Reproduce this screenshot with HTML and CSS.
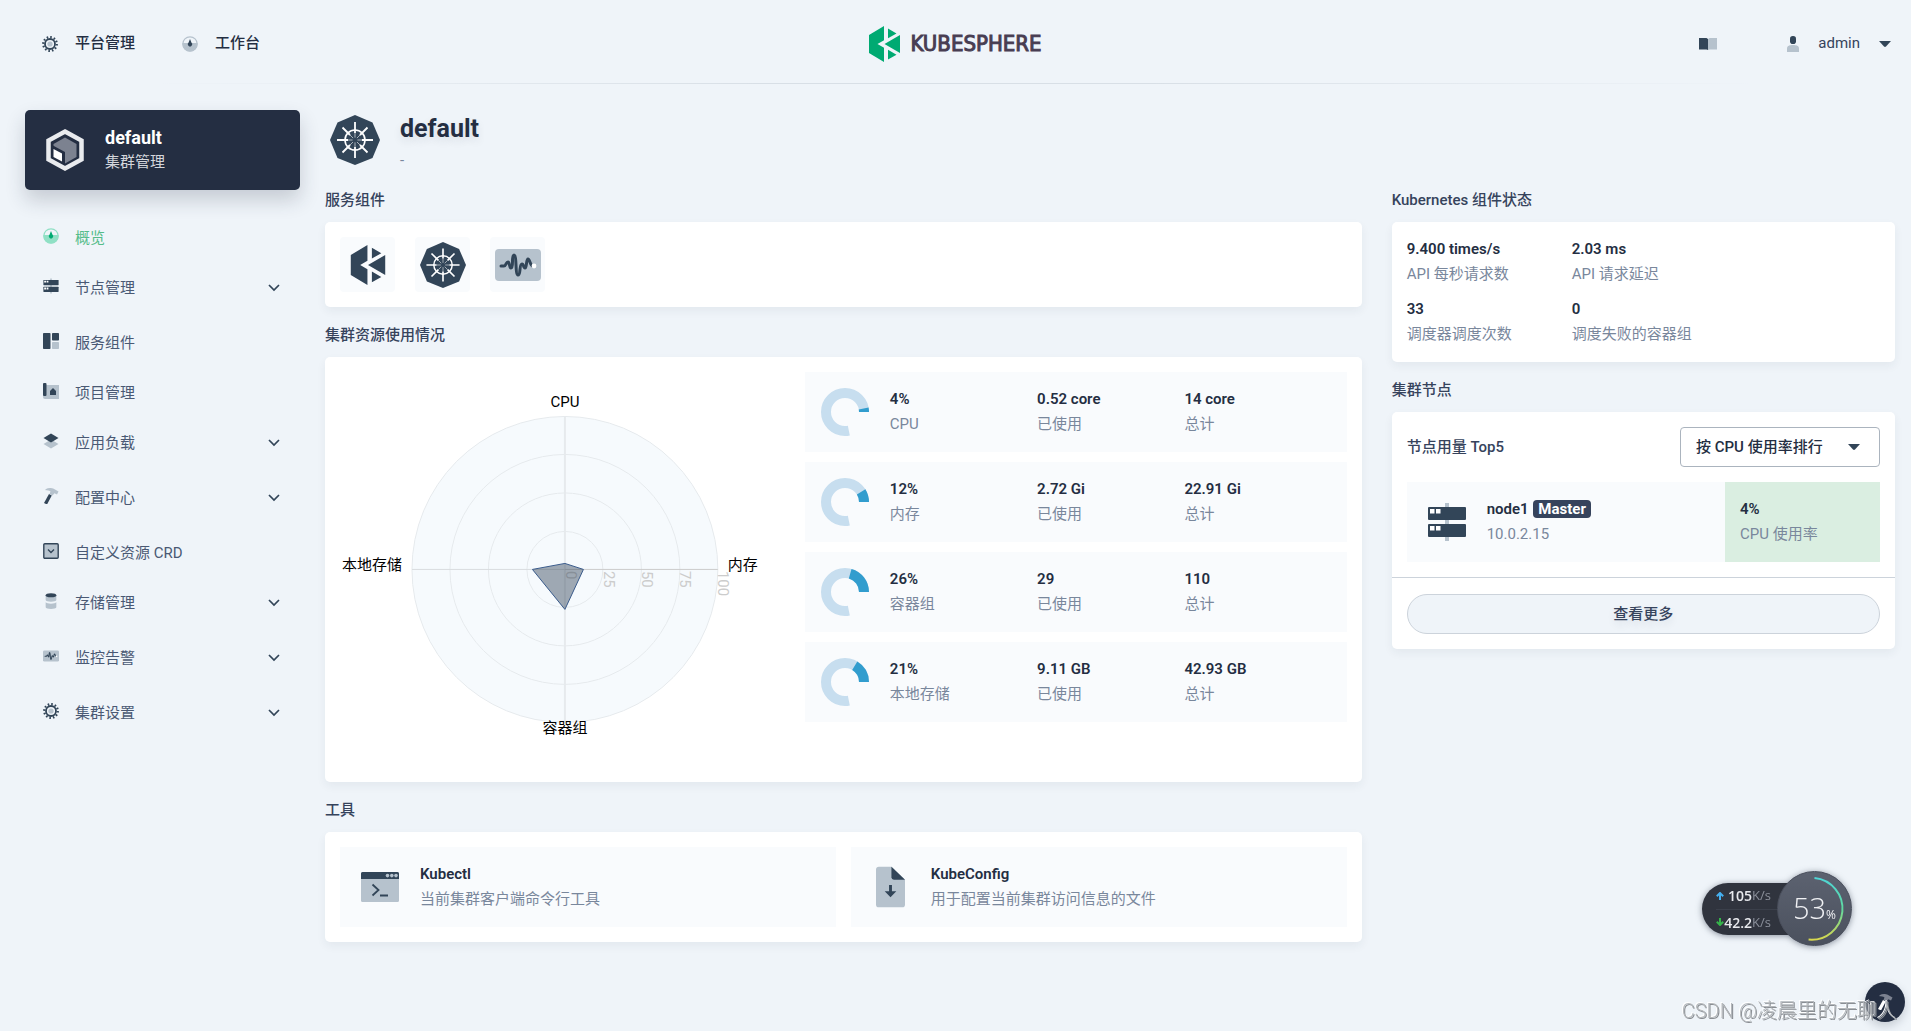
FILE: index.html
```html
<!DOCTYPE html>
<html lang="zh-CN">
<head>
<meta charset="utf-8">
<meta name="viewport" content="width=device-width, initial-scale=1">
<title>default - KubeSphere</title>
<link rel="stylesheet" href="styles.css">
</head>
<body>
<svg class="sprite" aria-hidden="true">
  <symbol id="i-gear" viewBox="0 0 16 16">
    <circle cx="8" cy="8" r="6.8" fill="none" stroke="#324558" stroke-width="2.2" stroke-dasharray="1.6 1.96"/>
    <circle cx="8" cy="8" r="5" fill="none" stroke="#324558" stroke-width="1.8"/>
    <circle cx="8" cy="8" r="2.6" fill="#b6c2cd"/>
  </symbol>
  <symbol id="i-dash" viewBox="0 0 16 16">
    <circle cx="8" cy="8" r="7.2" fill="none" stroke="var(--soft)" stroke-width="1.2"/>
    <path d="M.5 7h15v1a7.500 7.500 0 0 1-15 0z" fill="var(--soft)"/>
    <path d="M8 3l1.400 3.500a2.200 2.200 0 1 1-2.800 0z" fill="var(--deep)"/>
  </symbol>
  <symbol id="i-nodes" viewBox="0 0 40 40">
    <path d="M18 1h4v38h-4z" fill="#b6c2cd"/>
    <rect x="1" y="5" width="38" height="13" rx="1" fill="#324558"/>
    <rect x="1" y="22" width="38" height="13" rx="1" fill="#324558"/>
    <path d="M3 7h4.500v4.500H3zM9 7h4.500v4.500H9zM3 24h4.500v4.500H3zM9 24h4.500v4.500H9z" fill="#fff"/>
  </symbol>
  <symbol id="i-comp" viewBox="0 0 16 16">
    <rect x="0" y="0" width="7.500" height="16" rx=".8" fill="#324558"/>
    <rect x="9" y="0" width="7" height="7.500" rx=".8" fill="#324558"/>
    <rect x="9" y="9" width="7" height="7" rx=".8" fill="#b6c2cd"/>
  </symbol>
  <symbol id="i-project" viewBox="0 0 16 16">
    <path d="M2 2h14v14H2a2 2 0 0 1-2-2z" fill="#b6c2cd"/>
    <rect x="0" y="0" width="3.500" height="13" rx="1" fill="#324558"/>
    <path d="M7 12V8l3-3 3 3v4z" fill="#324558"/>
  </symbol>
  <symbol id="i-layers" viewBox="0 0 16 16">
    <path d="M8 6.500l7.500 4.500L8 15.500.5 11z" fill="#b6c2cd"/>
    <path d="M8 .5L15.500 5 8 9.500.5 5z" fill="#324558"/>
  </symbol>
  <symbol id="i-hammer" viewBox="0 0 16 16">
    <path d="M6 6l2.800 1.500L4 16.500 1 15z" fill="var(--deep)"/>
    <path d="M2.500 1.200C6-.6 10-.3 12 1.500l3.500 2-1.500 3-2.500-1.200-2 2.200-3-1.600 1-2.400c-1.500-1-3-1.200-5-1.200z" fill="var(--soft)"/>
  </symbol>
  <symbol id="i-crd" viewBox="0 0 16 16">
    <rect x=".8" y=".8" width="14.400" height="14.400" rx="1" fill="#b6c2cd" stroke="#324558" stroke-width="1.400"/>
    <path d="M5 6.500l3 3 3-3" fill="none" stroke="#324558" stroke-width="1.400"/>
  </symbol>
  <symbol id="i-storage" viewBox="0 0 16 18">
    <path d="M2 3v5c0 2.500 12 2.500 12 0V3zM2 10.500V16c0 2.500 12 2.500 12 0v-5.500c-1 2-11 2-12 0z" fill="#b6c2cd"/>
    <ellipse cx="8" cy="2.500" rx="6" ry="2.300" fill="#324558"/>
  </symbol>
  <symbol id="i-monitor" viewBox="0 0 46 32">
    <rect width="46" height="32" rx="4" fill="#b6c2cd"/>
    <path d="M6 17h3c2 0 2-4 4-4s1 6 3 6c3 0 0-13 3-13s1 20 4 20 1-11 4-11c2 0 1 4 3 4s1-9 3-9 2 7 5 7" fill="none" stroke="#324558" stroke-width="3" stroke-linecap="round"/>
    <circle cx="39" cy="17" r="2.400" fill="#fff"/>
  </symbol>
  <symbol id="i-chevron" viewBox="0 0 12 8"><path d="M1 1l5 5 5-5" fill="none" stroke="#324558" stroke-width="1.700"/></symbol>
  <symbol id="i-caret" viewBox="0 0 12 6"><path d="M0 0h12L7 5.500q-1 .8-2 0z" fill="#324558"/></symbol>
  <symbol id="i-book" viewBox="0 0 18 14">
    <path d="M0 1h7.500L9 2v11l-1.500-.5H0z" fill="#324558"/>
    <path d="M9 2l1.500-1H18v11.500h-7.500L9 13z" fill="#b6c2cd"/>
  </symbol>
  <symbol id="i-user" viewBox="0 0 12 16">
    <path d="M0 16v-3.500C0 9.500 3 9 6 9s6 .5 6 3.500V16z" fill="#b6c2cd"/>
    <rect x="3" y="0" width="6" height="8" rx="2.800" fill="#324558"/>
  </symbol>
  <symbol id="i-ks" viewBox="0 0 31 36">
    <path d="M15 0v14.200L8.500 18l6.500 3.800V36L0 27V9zM31 9v18l-15.500-9zM19 2.500l8.500 4.900L19 12.200zM19 23.800l8.500 4.900L19 33.500z" fill="currentColor"/>
  </symbol>
  <symbol id="i-k8s" viewBox="0 0 50 50">
    <path d="M25 0l17.500 7.500L50 25l-7.500 18L25 50 7.500 43 0 25 7.500 7.500z" fill="#324558"/>
    <g fill="none" stroke="#fff">
      <circle cx="25" cy="25" r="10" stroke-width="1.600"/>
      <path d="M25 7v11M25 32v11M7 25h11M32 25h11M12.500 12.500l7.500 7.500M30 30l7.500 7.500M37.500 12.500L30 20M20 30l-7.500 7.500" stroke-width="1.800"/>
      <path d="M25 18v14M18 25h14M20 20l10 10M30 20L20 30" stroke-width="1" opacity=".6"/>
    </g>
    <circle cx="25" cy="25" r="2.500" fill="#324558"/>
  </symbol>
  <symbol id="i-cube" viewBox="0 0 40 44">
    <path d="M20 3.500l16.500 9v19L20 40.500l-16.500-9v-19z" fill="none" stroke="#e9ebee" stroke-width="4.500"/>
    <path d="M20 9.500L31.500 16v13L20 35.500 8.500 29V16z" fill="#7c8290"/>
    <path d="M7 17l13 7v13L7 30z" fill="#242e42"/>
    <path d="M8.500 21l8.500 4.500v8L8.500 29z" fill="#fff"/>
  </symbol>
  <symbol id="i-terminal" viewBox="0 0 38 30">
    <rect width="38" height="30" rx="1.500" fill="#b6c2cd"/>
    <path d="M1.500 0h35A1.500 1.500 0 0 1 38 1.500V7H0V1.500A1.500 1.500 0 0 1 1.500 0z" fill="#324558"/>
    <g fill="#b6c2cd"><circle cx="26.500" cy="3.600" r="1.800"/><circle cx="30.800" cy="3.600" r="1.800"/><circle cx="35" cy="3.600" r="1.800"/></g>
    <path d="M11.500 12.500l6 5.500-6 5.500M19 23.500h8" fill="none" stroke="#324558" stroke-width="1.800"/>
  </symbol>
  <symbol id="i-file" viewBox="0 0 30 42">
    <path d="M3 0h13l14 13.500V39a3 3 0 0 1-3 3H3a3 3 0 0 1-3-3V3a3 3 0 0 1 3-3z" fill="#b6c2cd"/>
    <path d="M16 0l14 13.500H18.500A2.500 2.500 0 0 1 16 11z" fill="#324558"/>
    <path d="M13.500 19h3v6.500H21L15 31.500 9 25.500h4.500z" fill="#324558"/>
  </symbol>
</svg>

<header class="topbar">
  <nav class="topnav">
    <a href="#" class="toplink"><svg class="icon16"><use href="#i-gear"/></svg>平台管理</a>
    <a href="#" class="toplink"><svg class="icon16"><use href="#i-dash"/></svg>工作台</a>
  </nav>
  <a href="#" class="logo"><svg class="logo-mark"><use href="#i-ks"/></svg><span class="logo-text">KUBESPHERE</span></a>
  <div class="account">
    <button type="button" class="plain" aria-label="文档"><svg class="icon-book"><use href="#i-book"/></svg></button>
    <button type="button" class="plain user"><svg class="icon-user"><use href="#i-user"/></svg>admin<svg class="caret"><use href="#i-caret"/></svg></button>
  </div>
</header>

<div class="layout">
  <aside class="sidebar">
    <div class="cluster">
      <svg class="cube"><use href="#i-cube"/></svg>
      <div><div class="cluster-name">default</div><div class="cluster-sub">集群管理</div></div>
    </div>
    <nav class="menu">
      <a href="#" class="item active"><svg class="icon16"><use href="#i-dash"/></svg>概览</a>
      <button type="button" class="item parent"><svg class="icon16"><use href="#i-nodes"/></svg>节点管理<svg class="chevron"><use href="#i-chevron"/></svg></button>
      <a href="#" class="item"><svg class="icon16"><use href="#i-comp"/></svg>服务组件</a>
      <a href="#" class="item"><svg class="icon16"><use href="#i-project"/></svg>项目管理</a>
      <button type="button" class="item parent"><svg class="icon16"><use href="#i-layers"/></svg>应用负载<svg class="chevron"><use href="#i-chevron"/></svg></button>
      <button type="button" class="item parent"><svg class="icon16"><use href="#i-hammer"/></svg>配置中心<svg class="chevron"><use href="#i-chevron"/></svg></button>
      <a href="#" class="item"><svg class="icon16"><use href="#i-crd"/></svg>自定义资源 CRD</a>
      <button type="button" class="item parent"><svg class="icon16"><use href="#i-storage"/></svg>存储管理<svg class="chevron"><use href="#i-chevron"/></svg></button>
      <button type="button" class="item parent"><svg class="icon16"><use href="#i-monitor"/></svg>监控告警<svg class="chevron"><use href="#i-chevron"/></svg></button>
      <button type="button" class="item parent"><svg class="icon16"><use href="#i-gear"/></svg>集群设置<svg class="chevron"><use href="#i-chevron"/></svg></button>
    </nav>
  </aside>

  <main class="content">
    <div class="page-head">
      <svg class="k8s-big"><use href="#i-k8s"/></svg>
      <div><h1>default</h1><p>-</p></div>
    </div>

    <div class="col-main">
      <section>
        <h2>服务组件</h2>
        <div class="card services">
          <a href="#" class="service" aria-label="KubeSphere"><svg class="svc-ks"><use href="#i-ks"/></svg></a>
          <a href="#" class="service" aria-label="Kubernetes"><svg class="svc-k8s"><use href="#i-k8s"/></svg></a>
          <a href="#" class="service" aria-label="Monitoring"><svg class="svc-mon"><use href="#i-monitor"/></svg></a>
        </div>
      </section>

      <section>
        <h2>集群资源使用情况</h2>
        <div class="card usage">
          <svg class="radar" viewBox="0 0 465 395" role="img" aria-label="集群资源使用情况">
            <circle cx="225" cy="197.500" r="153" fill="#f6fafd"/>
            <g fill="none" stroke="#e6eaed">
              <circle cx="225" cy="197.500" r="153"/><circle cx="225" cy="197.500" r="115"/>
              <circle cx="225" cy="197.500" r="76.500"/><circle cx="225" cy="197.500" r="38"/>
              <path d="M225 44v306" stroke-width="2"/><path d="M72 197.500h153" stroke="#d8dcdf"/>
            </g>
            <path d="M225 197.500h153" stroke="#ccc"/>
            <g class="ticks">
              <text transform="translate(226 199) rotate(90)">0</text>
              <text transform="translate(264 199) rotate(90)">25</text>
              <text transform="translate(302 199) rotate(90)">50</text>
              <text transform="translate(340 199) rotate(90)">75</text>
              <text transform="translate(378 199) rotate(90)">100</text>
            </g>
            <path d="M225 191.500l18.500 6L225 237.500l-32.500-40z" fill="#324558" fill-opacity=".45" stroke="#3a5b8c"/>
            <g class="axis">
              <text x="225" y="35" text-anchor="middle">CPU</text>
              <text x="225" y="361" text-anchor="middle">容器组</text>
              <text x="62" y="198" text-anchor="end">本地存储</text>
              <text x="388" y="198">内存</text>
            </g>
          </svg>
          <div class="meters">
            <div class="meter">
              <svg class="donut" viewBox="0 0 48 48"><g transform="matrix(1 0 0 -1 0 48)"><circle class="track" cx="24" cy="24" r="19" pathLength="360" stroke-dasharray="282 360"/><circle class="value" cx="24" cy="24" r="19" pathLength="360" stroke-dasharray="11 360"/></g></svg>
              <div class="stat"><strong>4%</strong><span>CPU</span></div>
              <div class="stat"><strong>0.52 core</strong><span>已使用</span></div>
              <div class="stat"><strong>14 core</strong><span>总计</span></div>
            </div>
            <div class="meter">
              <svg class="donut" viewBox="0 0 48 48"><g transform="matrix(1 0 0 -1 0 48)"><circle class="track" cx="24" cy="24" r="19" pathLength="360" stroke-dasharray="282 360"/><circle class="value" cx="24" cy="24" r="19" pathLength="360" stroke-dasharray="32 360"/></g></svg>
              <div class="stat"><strong>12%</strong><span>内存</span></div>
              <div class="stat"><strong>2.72 Gi</strong><span>已使用</span></div>
              <div class="stat"><strong>22.91 Gi</strong><span>总计</span></div>
            </div>
            <div class="meter">
              <svg class="donut" viewBox="0 0 48 48"><g transform="matrix(1 0 0 -1 0 48)"><circle class="track" cx="24" cy="24" r="19" pathLength="360" stroke-dasharray="282 360"/><circle class="value" cx="24" cy="24" r="19" pathLength="360" stroke-dasharray="74 360"/></g></svg>
              <div class="stat"><strong>26%</strong><span>容器组</span></div>
              <div class="stat"><strong>29</strong><span>已使用</span></div>
              <div class="stat"><strong>110</strong><span>总计</span></div>
            </div>
            <div class="meter">
              <svg class="donut" viewBox="0 0 48 48"><g transform="matrix(1 0 0 -1 0 48)"><circle class="track" cx="24" cy="24" r="19" pathLength="360" stroke-dasharray="282 360"/><circle class="value" cx="24" cy="24" r="19" pathLength="360" stroke-dasharray="59 360"/></g></svg>
              <div class="stat"><strong>21%</strong><span>本地存储</span></div>
              <div class="stat"><strong>9.11 GB</strong><span>已使用</span></div>
              <div class="stat"><strong>42.93 GB</strong><span>总计</span></div>
            </div>
          </div>
        </div>
      </section>

      <section>
        <h2>工具</h2>
        <div class="card tools">
          <a href="#" class="tool"><span class="pic"><svg class="icon-terminal"><use href="#i-terminal"/></svg></span><span class="stat"><strong>Kubectl</strong><span>当前集群客户端命令行工具</span></span></a>
          <a href="#" class="tool"><span class="pic"><svg class="icon-file"><use href="#i-file"/></svg></span><span class="stat"><strong>KubeConfig</strong><span>用于配置当前集群访问信息的文件</span></span></a>
        </div>
      </section>
    </div>

    <div class="col-side">
      <section>
        <h2>Kubernetes 组件状态</h2>
        <div class="card status">
          <div class="stat"><strong>9.400 times/s</strong><span>API 每秒请求数</span></div>
          <div class="stat"><strong>2.03 ms</strong><span>API 请求延迟</span></div>
          <div class="stat"><strong>33</strong><span>调度器调度次数</span></div>
          <div class="stat"><strong>0</strong><span>调度失败的容器组</span></div>
        </div>
      </section>

      <section>
        <h2>集群节点</h2>
        <div class="card nodes">
          <div class="nodes-body">
            <div class="nodes-head">
              <label for="sort">节点用量 Top5</label>
              <div class="select">
                <select id="sort"><option>按 CPU 使用率排行</option><option>按内存使用率排行</option></select>
                <svg class="caret"><use href="#i-caret"/></svg>
              </div>
            </div>
            <div class="node">
              <span class="pic"><svg class="icon-node"><use href="#i-nodes"/></svg></span>
              <div class="stat grow"><strong>node1 <em class="badge">Master</em></strong><span>10.0.2.15</span></div>
              <div class="stat load"><strong>4%</strong><span>CPU 使用率</span></div>
            </div>
          </div>
          <div class="nodes-foot"><button type="button" class="more">查看更多</button></div>
        </div>
      </section>
    </div>
  </main>
</div>

<button type="button" class="fab" aria-label="工具箱"><svg class="icon16"><use href="#i-hammer"/></svg></button>

<div class="netmon">
  <div class="rates">
    <div class="rate"><svg class="arrow up" viewBox="0 0 8 8"><path d="M4 8V1M.8 4.200L4 1l3.200 3.200"/></svg><b>105</b><span>K/s</span></div>
    <div class="rate"><svg class="arrow down" viewBox="0 0 8 8"><path d="M4 0v7M.8 3.800L4 7l3.200-3.200"/></svg><b>42.2</b><span>K/s</span></div>
  </div>
  <div class="dial">
    <svg class="dial-ring" viewBox="0 0 74 74">
      <defs><linearGradient id="ring" x1="0" y1="0" x2="0" y2="1"><stop offset="0" stop-color="#4fd6d6"/><stop offset=".5" stop-color="#5fd9a0"/><stop offset="1" stop-color="#d8d84e"/></linearGradient></defs>
      <path d="M37 6a31 31 0 1 1-6 62.500" fill="none" stroke="url(#ring)" stroke-width="2"/>
    </svg>
    <span class="pct">53</span><span class="pct-sign">%</span>
  </div>
</div>
<div class="watermark">CSDN @凌晨里的无聊人</div>
</body>
</html>
```
FILE: styles.css
```css
:root {
  --deep: #324558;
  --soft: #b6c2cd;
  --ink: #242e42;
  --text: #36435c;
  --muted: #79879c;
  --panel: #f9fbfd;
}
* { box-sizing: border-box; }
body {
  margin: 0;
  min-height: 100vh;
  background: #eff4f9;
  color: var(--text);
  font: 15px/25px Roboto, "Noto Sans CJK SC", sans-serif;
}
h1, h2, p { margin: 0; }
a { color: inherit; text-decoration: none; }
button, select { font: inherit; color: inherit; }
svg { display: block; flex: none; }
.sprite { position: absolute; width: 0; height: 0; }
.icon16 { width: 16px; height: 16px; }
.caret { width: 12px; height: 6px; }

.topbar {
  display: grid;
  grid-template-columns: 1fr auto 1fr;
  align-items: center;
  height: 84px;
  padding: 4px 20px 0;
  border-bottom: 1px solid;
  border-image: linear-gradient(90deg, transparent 8%, #d8dfe6 40%, #d8dfe6 60%, transparent 92%) 1;
}
.topnav { display: flex; gap: 47px; padding-left: 22px; }
.toplink { display: flex; align-items: center; gap: 17px; color: var(--ink); font-weight: 500; }
.logo { display: flex; align-items: center; gap: 10px; color: #00aa72; }
.logo-mark { width: 31px; height: 36px; }
.logo-text {
  color: #483d52;
  font: 22px/36px "Liberation Sans Narrow", "DejaVu Sans Condensed", sans-serif;
  -webkit-text-stroke: 1px #483d52;
}
.account { display: flex; justify-content: flex-end; align-items: center; gap: 70px; }
.plain { display: flex; align-items: center; padding: 0; border: 0; background: none; }
.user { gap: 19px; }
.icon-book { width: 18px; height: 14px; }
.icon-user { width: 12px; height: 16px; }

.layout {
  display: grid;
  grid-template-columns: 275px minmax(0, 1fr);
  gap: 25px;
  padding: 26px 16px 40px 25px;
}
.cluster {
  display: flex;
  align-items: center;
  gap: 20px;
  height: 80px;
  padding: 0 20px;
  border-radius: 5px;
  background: var(--ink);
  box-shadow: 0 10px 20px rgba(36, 46, 66, .2);
}
.cube { width: 40px; height: 44px; }
.cluster-name { color: #fff; font-size: 18px; font-weight: 700; }
.cluster-sub { color: #d3d6dc; }
.menu { display: flex; flex-direction: column; margin-top: 23px; }
.item {
  display: flex;
  align-items: center;
  gap: 16px;
  height: 50px;
  padding: 0 20px 0 18px;
  border: 0;
  background: none;
  color: #4a5974;
  text-align: left;
}
.item .icon16 { margin-bottom: 4px; }
.parent { margin-bottom: 5px; }
.chevron { width: 12px; height: 8px; margin-left: auto; }
.active { --deep: #00aa72; --soft: #90e0c5; color: #55bc8a; }

.content {
  display: grid;
  grid-template-columns: repeat(12, minmax(0, 1fr));
  column-gap: 30px;
  align-content: start;
}
.page-head { grid-column: 1 / -1; display: flex; gap: 20px; padding-left: 5px; height: 62px; }
.k8s-big { width: 50px; height: 50px; margin-top: 5px; }
h1 { color: var(--ink); font-size: 25px; line-height: 38px; font-weight: 700; text-shadow: 0 4px 8px rgba(36, 46, 66, .1); }
.page-head p { color: var(--muted); line-height: 24px; }
.col-main { grid-column: span 8; }
.col-side { grid-column: span 4; }
h2 { padding: 16px 0 10px; font-size: 15px; line-height: 24px; font-weight: 500; }
.card { padding: 15px; border-radius: 5px; background: #fff; box-shadow: 0 4px 10px rgba(36, 46, 66, .06); }
.services { display: flex; gap: 20px; }
.service { display: flex; align-items: center; justify-content: center; width: 55px; height: 55px; border-radius: 4px; background: var(--panel); color: var(--deep); }
.svc-ks { width: 36px; height: 40px; }
.svc-k8s { width: 46px; height: 46px; }
.svc-mon { width: 46px; height: 32px; }

.usage { display: grid; grid-template-columns: 465fr 542fr; align-items: start; }
.radar { width: 100%; height: auto; }
.axis { font-size: 15px; fill: #000; }
.ticks { font-size: 15px; fill: #ccc; }
.meters { display: grid; gap: 10px; }
.meter { display: flex; align-items: center; height: 80px; padding: 0 15px 0 16px; background: var(--panel); }
.donut { width: 48px; height: 48px; margin-right: 21px; }
.donut circle { fill: none; stroke-width: 10; }
.track { stroke: #c7deef; }
.value { stroke: #329dce; }
.meter .stat { flex: 1; }
.stat { display: flex; flex-direction: column; }
.stat strong { color: var(--ink); font-weight: 600; }
.stat span { color: var(--muted); }

.tools { display: grid; grid-template-columns: 1fr 1fr; gap: 15px; }
.tool, .node { display: flex; align-items: center; height: 80px; padding-left: 15px; background: var(--panel); }
.pic { display: flex; justify-content: center; width: 50px; margin-right: 15px; }
.icon-terminal { width: 38px; height: 30px; }
.icon-file { width: 29px; height: 42px; }
.icon-node { width: 40px; height: 40px; }

.status { display: grid; grid-template-columns: 165px 1fr; gap: 10px 0; }
.nodes { padding: 0; }
.nodes-body { padding: 15px; }
.nodes-head { display: flex; align-items: center; justify-content: space-between; margin-bottom: 15px; font-weight: 500; }
.select { position: relative; width: 200px; }
.select select {
  display: block;
  width: 100%;
  height: 40px;
  padding: 0 32px 0 15px;
  border: 1px solid #abb4be;
  border-radius: 4px;
  background: #fff;
  color: var(--ink);
  font-weight: 500;
  appearance: none;
}
.select .caret { position: absolute; top: 17px; right: 20px; pointer-events: none; }
.grow { flex: 1; }
.badge { margin-left: 1px; padding: 0 5px; border-radius: 4px; background: var(--text); color: #fff; font-style: normal; font-weight: 700; }
.load { justify-content: center; width: 155px; height: 80px; padding-left: 15px; background: #daeee1; }
.nodes-foot { padding: 16px 15px 15px; border-top: 1px solid #ccd3db; }
.more {
  display: block;
  width: 100%;
  height: 40px;
  border: 1px solid #ccd3db;
  border-radius: 20px;
  background: #eff4f9;
  font-weight: 500;
  text-shadow: 0 4px 8px rgba(36, 46, 66, .1);
}

.fab {
  --deep: #fff;
  --soft: #7c8290;
  position: fixed;
  right: 6px;
  bottom: 9px;
  display: flex;
  align-items: center;
  justify-content: center;
  width: 40px;
  height: 40px;
  border: 0;
  border-radius: 50%;
  background: var(--ink);
  box-shadow: 0 4px 10px rgba(36, 46, 66, .2);
}
.netmon {
  position: fixed;
  right: 59px;
  bottom: 85px;
  display: flex;
  align-items: center;
  filter: drop-shadow(0 1px 3px rgba(36, 46, 66, .5));
  font-family: "Open Sans", sans-serif;
}
.rates { width: 101px; margin-right: -26px; padding-left: 14px; border-radius: 26px 0 0 26px; background: #30343e; }
.rate { display: flex; align-items: center; height: 26px; }
.rate + .rate { border-top: 1px solid #3b404b; }
.rate b { width: 28px; color: #e8eaee; font-size: 14px; font-weight: 600; text-align: right; }
.rate span { color: #8b909b; font-size: 13px; }
.arrow { width: 8px; height: 8px; fill: none; stroke-width: 2; }
.up { stroke: #45b0f0; }
.down { stroke: #35b54a; }
.dial {
  position: relative;
  display: flex;
  align-items: baseline;
  justify-content: center;
  width: 75px;
  height: 75px;
  border: 1px solid #4a4f5c;
  border-radius: 50%;
  background: linear-gradient(#5c6270, #4b515e);
  color: #f0f1f4;
  line-height: 72px;
}
.dial-ring { position: absolute; inset: 0; width: 100%; height: 100%; }
.pct { font-size: 29px; font-weight: 300; }
.pct-sign { font-size: 12px; }
.watermark {
  position: fixed;
  right: 14px;
  bottom: 5px;
  color: #b4b8bc;
  font-size: 20px;
  font-weight: 300;
  line-height: 30px;
  text-shadow: 1px 1px 0 #8a8e93, -1px -1px 0 #fff;
  pointer-events: none;
}
```
